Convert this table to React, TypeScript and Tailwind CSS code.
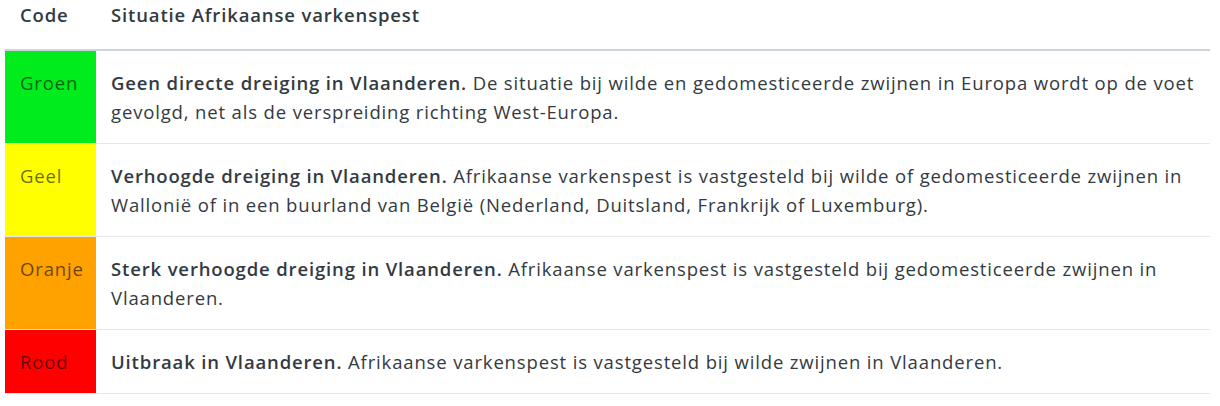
const rows = [
  {
    code: 'Groen',
    color: 'bg-[#00ec1c]',
    title: 'Geen directe dreiging in Vlaanderen.',
    text: 'De situatie bij wilde en gedomesticeerde zwijnen in Europa wordt op de voet gevolgd, net als de verspreiding richting West-Europa.',
  },
  {
    code: 'Geel',
    color: 'bg-[#ffff00]',
    title: 'Verhoogde dreiging in Vlaanderen.',
    text: 'Afrikaanse varkenspest is vastgesteld bij wilde of gedomesticeerde zwijnen in Wallonië of in een buurland van België (Nederland, Duitsland, Frankrijk of Luxemburg).',
  },
  {
    code: 'Oranje',
    color: 'bg-[#ffa200]',
    title: 'Sterk verhoogde dreiging in Vlaanderen.',
    text: 'Afrikaanse varkenspest is vastgesteld bij gedomesticeerde zwijnen in Vlaanderen.',
  },
  {
    code: 'Rood',
    color: 'bg-[#ff0000]',
    title: 'Uitbraak in Vlaanderen.',
    text: 'Afrikaanse varkenspest is vastgesteld bij wilde zwijnen in Vlaanderen.',
  },
]

export default function App() {
  return (
    <div className="min-h-screen bg-white pl-[5px] pr-[10px] font-['Open_Sans',sans-serif] text-[18.5px] leading-[29px] tracking-[0.85px] text-[#333a42]">
      <table className="w-full border-collapse">
        <thead>
          <tr className="border-b-2 border-[#cdd4dc]">
            <th className="w-[91px] pb-5 pl-[15px] text-left font-semibold">Code</th>
            <th className="pb-5 pl-[15px] text-left font-semibold">Situatie Afrikaanse varkenspest</th>
          </tr>
        </thead>
        <tbody>
          {rows.map((row) => (
            <tr key={row.code} className="border-b border-[#e6e9ec]">
              <td className={`${row.color} w-[91px] py-[17px] pl-[15px] align-top text-black/60`}>{row.code}</td>
              <td className="py-[17px] pl-[15px] pr-[10px] align-top">
                <span className="font-semibold">{row.title}</span> {row.text}
              </td>
            </tr>
          ))}
        </tbody>
      </table>
    </div>
  )
}
